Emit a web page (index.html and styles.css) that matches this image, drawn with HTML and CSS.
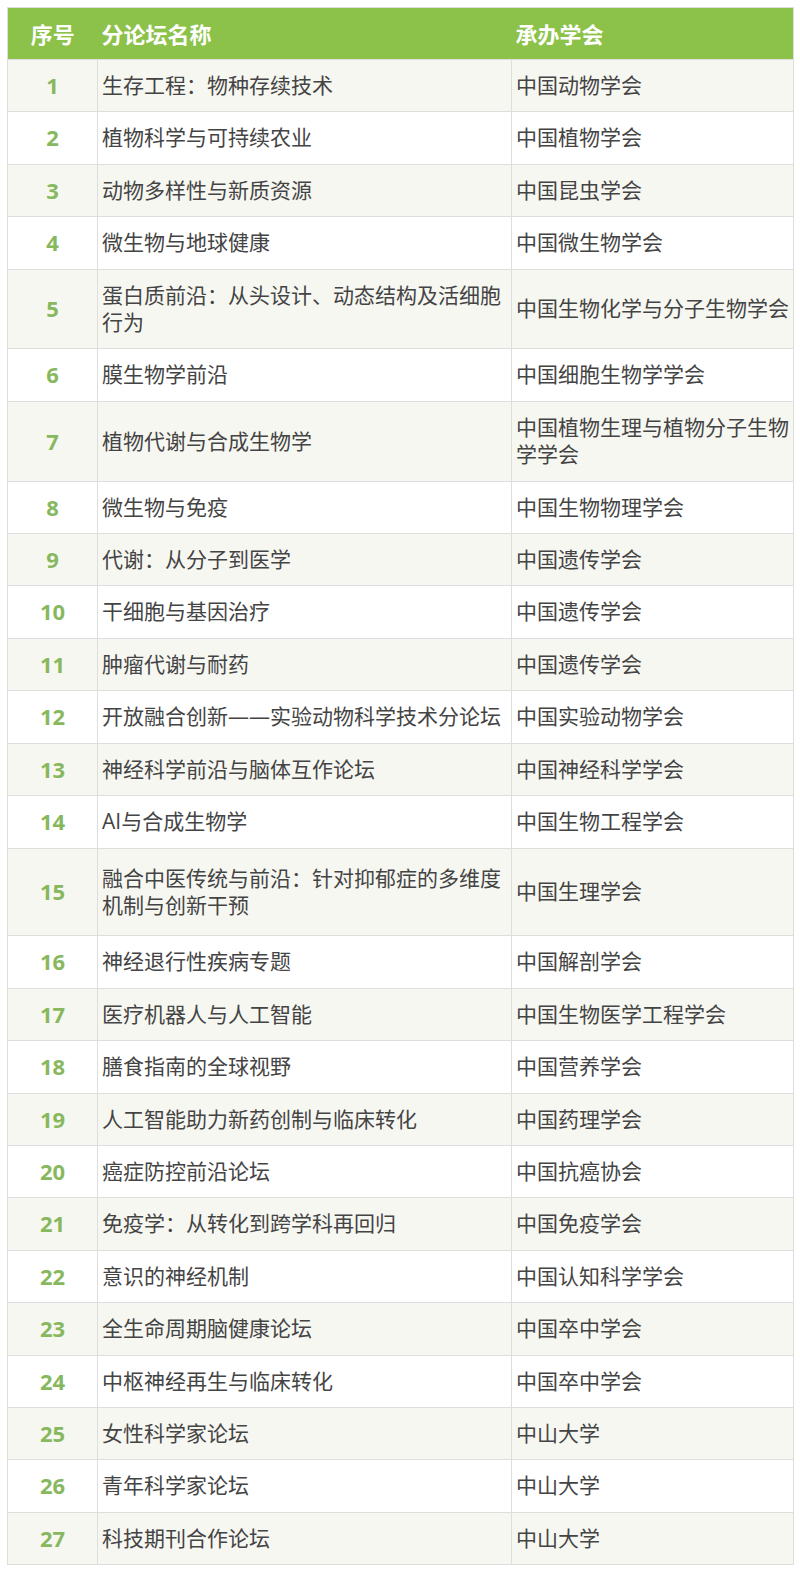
FILE: index.html
```html
<!DOCTYPE html>
<html lang="zh-CN">
<head>
<meta charset="utf-8">
<title>分论坛列表</title>
<link rel="stylesheet" href="styles.css">
</head>
<body>
<table class="forum-table">
  <colgroup>
    <col class="col-no">
    <col class="col-name">
    <col class="col-org">
  </colgroup>
  <thead>
    <tr>
      <th class="th-no">序号</th>
      <th>分论坛名称</th>
      <th>承办学会</th>
    </tr>
  </thead>
  <tbody>
    <tr><td class="no">1</td><td>生存工程：物种存续技术</td><td>中国动物学会</td></tr>
    <tr><td class="no">2</td><td>植物科学与可持续农业</td><td>中国植物学会</td></tr>
    <tr><td class="no">3</td><td>动物多样性与新质资源</td><td>中国昆虫学会</td></tr>
    <tr><td class="no">4</td><td>微生物与地球健康</td><td>中国微生物学会</td></tr>
    <tr class="row-double"><td class="no">5</td><td>蛋白质前沿：从头设计、动态结构及活细胞行为</td><td>中国生物化学与分子生物学会</td></tr>
    <tr><td class="no">6</td><td>膜生物学前沿</td><td>中国细胞生物学学会</td></tr>
    <tr><td class="no">7</td><td>植物代谢与合成生物学</td><td>中国植物生理与植物分子生物学学会</td></tr>
    <tr><td class="no">8</td><td>微生物与免疫</td><td>中国生物物理学会</td></tr>
    <tr><td class="no">9</td><td>代谢：从分子到医学</td><td>中国遗传学会</td></tr>
    <tr><td class="no">10</td><td>干细胞与基因治疗</td><td>中国遗传学会</td></tr>
    <tr><td class="no">11</td><td>肿瘤代谢与耐药</td><td>中国遗传学会</td></tr>
    <tr><td class="no">12</td><td>开放融合创新——实验动物科学技术分论坛</td><td>中国实验动物学会</td></tr>
    <tr><td class="no">13</td><td>神经科学前沿与脑体互作论坛</td><td>中国神经科学学会</td></tr>
    <tr><td class="no">14</td><td>AI与合成生物学</td><td>中国生物工程学会</td></tr>
    <tr class="row-tall"><td class="no">15</td><td>融合中医传统与前沿：针对抑郁症的多维度机制与创新干预</td><td>中国生理学会</td></tr>
    <tr><td class="no">16</td><td>神经退行性疾病专题</td><td>中国解剖学会</td></tr>
    <tr><td class="no">17</td><td>医疗机器人与人工智能</td><td>中国生物医学工程学会</td></tr>
    <tr><td class="no">18</td><td>膳食指南的全球视野</td><td>中国营养学会</td></tr>
    <tr><td class="no">19</td><td>人工智能助力新药创制与临床转化</td><td>中国药理学会</td></tr>
    <tr><td class="no">20</td><td>癌症防控前沿论坛</td><td>中国抗癌协会</td></tr>
    <tr><td class="no">21</td><td>免疫学：从转化到跨学科再回归</td><td>中国免疫学会</td></tr>
    <tr><td class="no">22</td><td>意识的神经机制</td><td>中国认知科学学会</td></tr>
    <tr><td class="no">23</td><td>全生命周期脑健康论坛</td><td>中国卒中学会</td></tr>
    <tr><td class="no">24</td><td>中枢神经再生与临床转化</td><td>中国卒中学会</td></tr>
    <tr><td class="no">25</td><td>女性科学家论坛</td><td>中山大学</td></tr>
    <tr><td class="no">26</td><td>青年科学家论坛</td><td>中山大学</td></tr>
    <tr><td class="no">27</td><td>科技期刊合作论坛</td><td>中山大学</td></tr>
  </tbody>
</table>
</body>
</html>
```
FILE: styles.css
```css
html, body {
  margin: 0;
  padding: 0;
  background: #ffffff;
}

body {
  padding: 7px 0 0 7px;
  font-family: "Open Sans", "Noto Sans CJK SC", sans-serif;
}

.forum-table {
  width: 786px;
  border-collapse: collapse;
  table-layout: fixed;
  border: 1px solid #dedede;
}

.col-no { width: 90px; }
.col-name { width: 414px; }
.col-org { width: 282px; }

.forum-table th {
  background: #8cc24a;
  color: #ffffff;
  font-size: 22px;
  font-weight: 700;
  text-align: left;
  height: 51px;
  padding: 0 4px;
  line-height: 28px;
  border: none;
}

.forum-table th.th-no {
  text-align: center;
}

.forum-table td {
  border: 1px solid #dedede;
  font-size: 21px;
  color: #444444;
  line-height: 27.4px;
  padding: 12px 3px 12px 4px;
  vertical-align: middle;
}

.forum-table tbody tr:nth-child(odd) td {
  background: #f7f7f2;
}

.forum-table tbody tr:nth-child(even) td {
  background: #ffffff;
}

.forum-table td.no {
  text-align: center;
  color: #88b85e;
  font-weight: 700;
  font-size: 22px;
  line-height: 27.4px;
  padding-left: 0;
  padding-right: 0;
}

.forum-table tr.row-tall td {
  padding-top: 16px;
  padding-bottom: 16px;
}
```
